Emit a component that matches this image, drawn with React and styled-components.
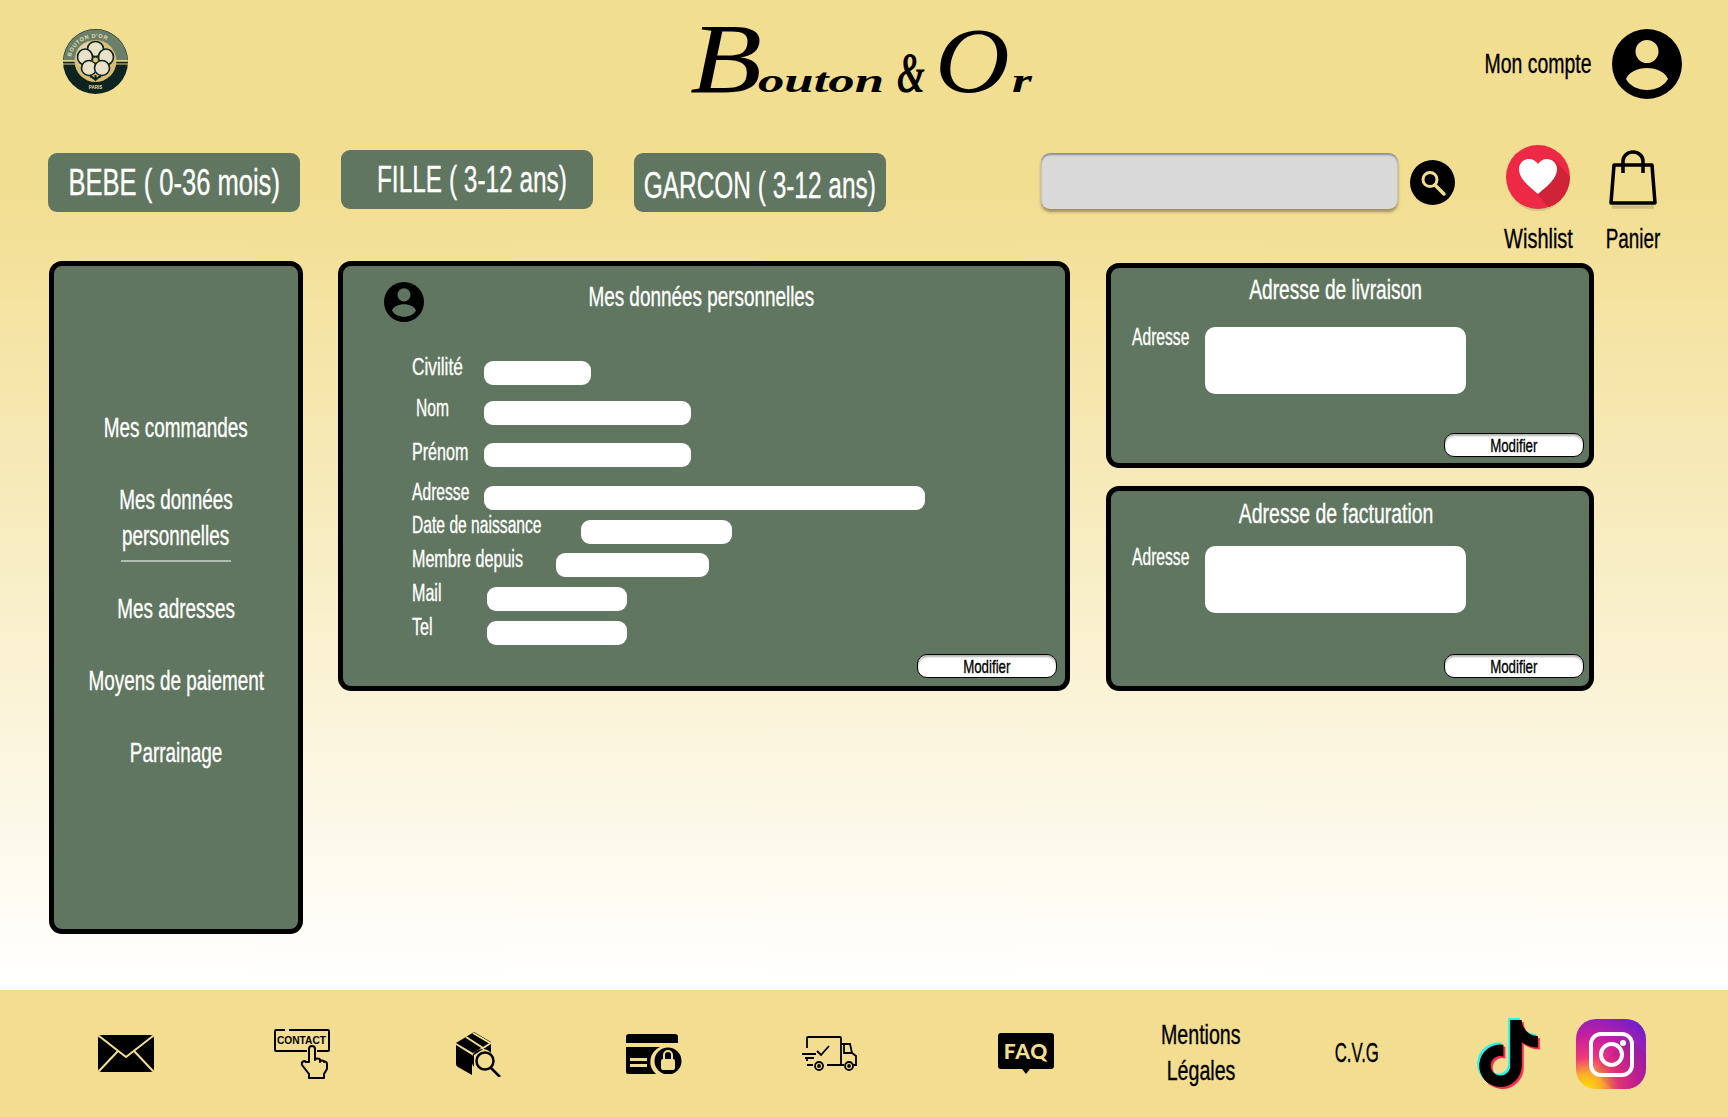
import React from "react";
import styled, { createGlobalStyle } from "styled-components";
import { FaTiktok } from "react-icons/fa";

const GlobalStyle = createGlobalStyle`
  html, body { margin: 0; padding: 0; }
  body { font-family: "Liberation Sans", Arial, sans-serif; }
  * { box-sizing: border-box; }
`;

const GREEN = "#617660";
const SAND = "#f2de91";

const Page = styled.div`
  width: 1728px;
  height: 1117px;
  overflow: hidden;
  display: flex;
  flex-direction: column;
  background: linear-gradient(180deg, ${SAND} 0, ${SAND} 190px, #ffffff 985px);
`;

// no condensed family is installed, so the narrow lettering is squeezed
const Squeeze = styled.span`
  display: inline-block;
  flex: none;
  white-space: nowrap;
  -webkit-text-stroke: 0.35px currentColor;
  transform: scaleX(${(p) => p.$x || 0.7});
  transform-origin: ${(p) => p.$origin || "center"};
`;

const Header = styled.header`
  display: grid;
  grid-template-columns: 627px 1fr auto;
  align-items: center;
  height: 118px;
  padding: 0 46px 0 63px;
`;

const LogoSlot = styled.div`
  height: 65px;
  margin-top: 5px;
`;

const Brand = styled.h1`
  display: flex;
  align-items: baseline;
  height: 118px;
  margin: 0;
  font-family: "Liberation Serif", serif;
  font-style: italic;
  font-weight: 700;
  line-height: 118px;
  color: #000;
  white-space: nowrap;
`;

const BrandPart = styled.span`
  display: inline-block;
  flex: none;
  width: ${(p) => p.$w}px;
  font-size: ${(p) => p.$size}px;
  font-weight: ${(p) => p.$weight || 700};
  transform: scaleX(${(p) => p.$x});
  transform-origin: left;
`;

const Account = styled.div`
  display: flex;
  align-items: center;
  gap: 20px;
  margin-top: 10px;
  font-size: 27px;
`;

const NavRow = styled.nav`
  display: flex;
  align-items: flex-start;
  height: 143px;
  padding-left: 48px;
`;

const AgeTab = styled.div`
  width: 252px;
  height: 59px;
  margin: ${(p) => p.$top}px 41px 0 0;
  padding-left: ${(p) => p.$shift || 0}px;
  padding-top: ${(p) => p.$drop || 0}px;
  display: flex;
  justify-content: center;
  border-radius: 9px;
  background: ${GREEN};
  color: #fff;
  font-size: 37px;
  line-height: 59px;
`;

const SearchField = styled.div`
  width: 357px;
  height: 56px;
  margin: 35px 12px 0 114px;
  border-radius: 9px;
  background: #d9d9d9;
  box-shadow: 0 3px 3px rgba(0, 0, 0, 0.35), inset 0 2px 2px rgba(0, 0, 0, 0.35);
`;

const SearchButton = styled.div`
  width: 45px;
  height: 45px;
  margin: 42px 51px 0 0;
  display: flex;
`;

const ShopLink = styled.div`
  width: ${(p) => p.$w}px;
  margin: 27px 0 0 ${(p) => p.$left || 0}px;
  display: flex;
  flex-direction: column;
  align-items: center;
  font-size: 27px;
  color: #000;
`;

const ShopIcon = styled.div`
  height: 70px;
  padding-top: ${(p) => p.$top || 0}px;
  & > svg { display: block; }
`;

const ShopLabel = styled.div`
  margin-top: 5px;
  line-height: 38px;
  display: flex;
  justify-content: center;
  width: 100%;
`;

const Content = styled.main`
  display: flex;
  align-items: flex-start;
  padding-left: 49px;
  height: 729px;
`;

const Panel = styled.section`
  background: ${GREEN};
  border: 5px solid #000;
  border-radius: 13px;
  color: #fff;
`;

const SideMenu = styled(Panel)`
  width: 254px;
  height: 673px;
  margin-right: 35px;
  padding-top: 144px;
  display: flex;
  flex-direction: column;
  align-items: center;
`;

const MenuItem = styled.div`
  display: flex;
  justify-content: center;
  font-size: 27px;
  line-height: 36px;
  margin-bottom: 36px;
`;

const ActiveItem = styled(MenuItem)`
  width: 110px;
  flex-direction: column;
  align-items: center;
  padding-bottom: 6px;
  margin-bottom: 29px;
  border-bottom: 2px solid #b2bdb1;
`;

const DataPanel = styled(Panel)`
  width: 732px;
  height: 430px;
  padding: 16px 8px 0 41px;
`;

const DataHead = styled.div`
  display: flex;
  align-items: flex-start;
  height: 71px;
`;

const PanelTitle = styled.h2`
  display: flex;
  justify-content: center;
  margin: 0;
  font-size: 27px;
  font-weight: 400;
  line-height: 32px;
`;

const DataTitle = styled(PanelTitle)`
  width: 556px;
  margin: -1px 0 0 -1px;
`;

const FieldList = styled.div`
  display: flex;
  flex-direction: column;
  padding-left: 28px;
`;

const FieldRow = styled.div`
  display: flex;
  align-items: flex-start;
  height: ${(p) => p.$h}px;
`;

const FieldLabel = styled.label`
  width: ${(p) => p.$w}px;
  padding-left: ${(p) => p.$indent || 0}px;
  font-size: 23px;
  line-height: 28px;
  flex: none;
`;

const FieldBox = styled.div`
  width: ${(p) => p.$w}px;
  height: 24px;
  margin-top: ${(p) => p.$top}px;
  border-radius: 9px;
  background: #fff;
`;

const ModifyRow = styled.div`
  display: flex;
  justify-content: flex-end;
`;

const ModifyButton = styled.button`
  display: flex;
  justify-content: center;
  width: 140px;
  height: 24px;
  padding: 0;
  border: 1px solid #000;
  border-radius: 10px;
  background: #fff;
  box-shadow: inset 0 2px 2px rgba(0, 0, 0, 0.3);
  color: #000;
  font-family: inherit;
  font-size: 19px;
  line-height: 23px;
`;

const AddressColumn = styled.div`
  display: flex;
  flex-direction: column;
  gap: 18px;
  margin: 2px 0 0 36px;
`;

const AddressPanel = styled(Panel)`
  width: 488px;
  height: 205px;
  padding: ${(p) => p.$pad}px 5px 0 21px;
`;

const AddressTitle = styled(PanelTitle)`
  width: 420px;
  margin-left: -6px;
`;

const AddressBody = styled.div`
  display: flex;
  align-items: flex-start;
  height: ${(p) => p.$h}px;
  margin-top: ${(p) => p.$top}px;
`;

const AddressLabel = styled.label`
  width: 73px;
  font-size: 23px;
  line-height: 28px;
`;

const AddressBox = styled.div`
  width: 261px;
  height: 67px;
  margin-top: ${(p) => p.$top}px;
  border-radius: 10px;
  background: #fff;
`;

const Footer = styled.footer`
  height: 127px;
  display: flex;
  align-items: center;
  padding-left: 98px;
  background: #f2dd90;
`;

const FooterIcon = styled.div`
  width: ${(p) => p.$w}px;
  height: ${(p) => p.$h}px;
  margin-right: ${(p) => p.$gap}px;
  flex: none;
  & > svg { display: block; width: 100%; height: 100%; }
`;

const FooterText = styled.div`
  flex: none;
  display: flex;
  flex-direction: column;
  align-items: center;
  width: ${(p) => p.$w}px;
  margin: -2px ${(p) => p.$gap}px 0 0;
  font-size: 28px;
  line-height: 36px;
  color: #000;
`;

const TikTokMark = styled.div`
  position: relative;
  width: 63px;
  height: 71px;
  margin-right: 36px;
  flex: none;
`;

const TikTokLayer = styled(FaTiktok)`
  position: absolute;
  left: ${(p) => p.$off}px;
  top: ${(p) => p.$off}px;
  width: 59px;
  height: 67px;
  color: ${(p) => p.$color};
`;

const UserIcon = ({ size }) => (
  <svg width={size} height={size} viewBox="0 0 70 70">
    <path
      fillRule="evenodd"
      d="M35 0a35 35 0 1 0 0 70a35 35 0 1 0 0-70zM35 11a11.500 11.500 0 1 1 0 23a11.500 11.500 0 1 1 0-23zM35 39c10 0 18 4 21 11c-4 7-12 11-21 11s-17-4-21-11c3-7 11-11 21-11z"
    />
  </svg>
);

const Logo = () => (
  <svg width="65" height="65" viewBox="0 0 65 65">
    <defs>
      <clipPath id="logo-top"><rect x="0" y="0" width="65" height="33" /></clipPath>
      <path id="logo-arc" d="M7 34a25.500 25.500 0 0 1 51 0" />
    </defs>
    <circle cx="32.500" cy="32.500" r="32.500" fill="#0f2420" />
    <circle cx="32.500" cy="32.500" r="32" fill="#6b8068" clipPath="url(#logo-top)" />
    <rect x="0" y="31" width="65" height="1.500" fill="#e6cf7d" />
    <rect x="0" y="34.500" width="65" height="1" fill="#e6cf7d" />
    <circle cx="32.500" cy="32" r="21" fill="#d9bd72" />
    <circle cx="27" cy="27" r="14" fill="#efe6cf" opacity="0.55" />
    <text fontFamily="Liberation Sans" fontSize="5.500" fontWeight="700" fill="#e8dfb0" letterSpacing="0.6">
      <textPath href="#logo-arc" startOffset="8%">BOUTON D'OR</textPath>
    </text>
    <text x="32.500" y="60" fontFamily="Liberation Sans" fontSize="4.500" fontWeight="700" fill="#e8dfb0" textAnchor="middle">PARIS</text>
    <g fill="#e9e1c8" stroke="#0f2420" strokeWidth="1.600">
      <ellipse cx="32.500" cy="20" rx="8" ry="7.500" />
      <ellipse cx="22" cy="28" rx="7.500" ry="8" />
      <ellipse cx="43" cy="28" rx="7.500" ry="8" />
      <ellipse cx="26" cy="39" rx="7.500" ry="7.500" />
      <ellipse cx="39" cy="39" rx="7.500" ry="7.500" />
    </g>
    <circle cx="32.500" cy="31" r="3" fill="#e3c770" stroke="#0f2420" />
    <path d="M32.500 46v5M27 47c2 1 4 2 5.500 4c1.500-2 3.500-3 5.500-4" stroke="#0f2420" strokeWidth="2" fill="none" />
  </svg>
);

const SearchIcon = () => (
  <svg width="45" height="45" viewBox="0 0 45 45">
    <circle cx="22.500" cy="22.500" r="22.500" fill="#000" />
    <circle cx="20" cy="19.500" r="7" fill="none" stroke={SAND} strokeWidth="3" />
    <path d="M25 25l9 9" stroke={SAND} strokeWidth="3.500" strokeLinecap="round" />
  </svg>
);

const HeartIcon = () => (
  <svg width="64" height="70" viewBox="0 0 64 70">
    <defs>
      <clipPath id="heart-disc"><circle cx="32" cy="32" r="32" /></clipPath>
    </defs>
    <ellipse cx="32" cy="35" rx="31" ry="31" fill="#000" opacity="0.12" />
    <circle cx="32" cy="32" r="32" fill="#ed2946" />
    <path d="M22 38L48 14l16 18v32H44z" fill="#cf2438" clipPath="url(#heart-disc)" />
    <path d="M32 49C24 42 13 34 13 24c0-6 5-10 10-10c4 0 7 2 9 5c2-3 5-5 9-5c5 0 10 4 10 10c0 10-11 18-19 25z" fill="#fff" />
  </svg>
);

const BagIcon = () => (
  <svg width="48" height="60" viewBox="0 0 48 60" fill="none" stroke="#000" strokeWidth="3.500">
    <path d="M5 15h38l3 38H2z" strokeLinejoin="round" />
    <path d="M14 23V11a10 9 0 0 1 20 0v12" />
    <path d="M3 57h42" stroke="#000" strokeOpacity="0.15" />
  </svg>
);

const MailIcon = () => (
  <svg viewBox="0 0 56 37">
    <rect width="56" height="37" rx="4" fill="#000" />
    <path d="M1 1l27 21L55 1M1 36l19-20M55 36L36 16" fill="none" stroke={SAND} strokeWidth="2" />
  </svg>
);

const ContactIcon = () => (
  <svg viewBox="0 0 56 50">
    <path d="M11 1H2a1 1 0 0 0-1 1v19a1 1 0 0 0 1 1h31M43 22h11a1 1 0 0 0 1-1V2a1 1 0 0 0-1-1H15" fill="none" stroke="#000" strokeWidth="2" />
    <text x="3" y="15" fontFamily="Liberation Sans" fontWeight="700" fontSize="11" textLength="49" lengthAdjust="spacingAndGlyphs">CONTACT</text>
    <path d="M35 33V20a3 3 0 0 1 6 0v11c0-2 5-2 5 0v2c0-2 4-2 4 0c1-1 3 0 3 2v5l-3 5v4H35v-4l-7-9c-1-3 2-5 4-3z" fill={SAND} stroke="#000" strokeWidth="2" strokeLinejoin="round" />
  </svg>
);

const BoxIcon = () => (
  <svg viewBox="0 0 46 46">
    <path d="M1 12L19 1l17 10l-18 11z" fill="#000" />
    <path d="M11 6l17 11M18 2l17 10" stroke={SAND} strokeWidth="2" fill="none" />
    <path d="M1 14l16 10v20L3 36q-2-1-2-3z" fill="#000" />
    <path d="M19 24l17-11v9a11 11 0 0 0-17 14z" fill="#000" />
    <circle cx="30" cy="30" r="8.500" fill={SAND} stroke="#000" strokeWidth="2.500" />
    <path d="M36 37l9 9" stroke="#000" strokeWidth="2.500" />
  </svg>
);

const CardLockIcon = () => (
  <svg viewBox="0 0 57 40">
    <path d="M4 0h46a3 3 0 0 1 3 3v6H1V3a3 3 0 0 1 3-3z" fill="#000" />
    <path d="M1 13h34a16 16 0 0 0-4 27H3a2 2 0 0 1-2-2z" fill="#000" />
    <rect x="5" y="24" width="17" height="3" fill={SAND} />
    <rect x="5" y="30" width="17" height="3" fill={SAND} />
    <circle cx="43" cy="27" r="13.500" fill="#000" />
    <rect x="36" y="25" width="14" height="11" rx="2" fill={SAND} />
    <path d="M39 25v-4a4 4 0 0 1 8 0v4" fill="none" stroke={SAND} strokeWidth="2" />
  </svg>
);

const TruckIcon = () => (
  <svg viewBox="0 0 55 35" fill="none" stroke="#000" strokeWidth="1.800">
    <path d="M5 12V2q0-1 1-1h32q1 0 1 1v27H25M5 22v3M5 29h6" />
    <path d="M39 8h9l2 9l4 3v9h-3M39 29h3M42 8v9h8" />
    <path d="M15 15l4 4l8-9" />
    <path d="M0 18h14M3 22h9" />
    <circle cx="17" cy="30" r="4" />
    <circle cx="47" cy="30" r="4" />
    <circle cx="17" cy="30" r="1" fill="#000" />
    <circle cx="47" cy="30" r="1" fill="#000" />
  </svg>
);

const FaqIcon = () => (
  <svg viewBox="0 0 56 41">
    <path d="M3 0h50a3 3 0 0 1 3 3v30a3 3 0 0 1-3 3H32l-4 5l-4-5H3a3 3 0 0 1-3-3V3a3 3 0 0 1 3-3z" fill="#000" />
    <text x="28" y="25.500" fontFamily="Lato, Liberation Sans" fontWeight="900" fontSize="21" fill={SAND} textAnchor="middle" letterSpacing="0.8">FAQ</text>
  </svg>
);

const InstagramIcon = () => (
  <svg viewBox="0 0 70 70">
    <defs>
      <radialGradient id="insta-fill" cx="0.15" cy="1" r="1.200">
        <stop offset="0" stopColor="#ffdd00" />
        <stop offset="0.18" stopColor="#fbb02a" />
        <stop offset="0.38" stopColor="#f0367a" />
        <stop offset="0.62" stopColor="#c81f9c" />
        <stop offset="1" stopColor="#6e1fcf" />
      </radialGradient>
    </defs>
    <rect width="70" height="70" rx="20" fill="url(#insta-fill)" />
    <path d="M18 52L50 22a3 3 0 0 1 4-1l16 14v15a20 20 0 0 1-20 20H36z" fill="#000" opacity="0.06" />
    <rect x="15" y="15" width="41" height="41" rx="10" fill="none" stroke="#fff" strokeWidth="4" />
    <circle cx="35.500" cy="35.500" r="10.500" fill="none" stroke="#fff" strokeWidth="4" />
    <circle cx="47" cy="24" r="3" fill="#fff" />
  </svg>
);

const fields = [
  { label: "Civilité", w: 72, h: 41, box: 107, top: 8, x: 0.75 },
  { label: "Nom", w: 72, h: 44, box: 207, top: 7, indent: 4, x: 0.68 },
  { label: "Prénom", w: 72, h: 40, box: 207, top: 5 },
  { label: "Adresse", w: 72, h: 33, box: 441, top: 8, x: 0.68 },
  { label: "Date de naissance", w: 169, h: 34, box: 151, top: 9, x: 0.68 },
  { label: "Membre depuis", w: 144, h: 34, box: 153, top: 8 },
  { label: "Mail", w: 75, h: 34, box: 140, top: 8 },
  { label: "Tel", w: 75, h: 41, box: 140, top: 8 },
];

const Modify = () => (
  <ModifyRow>
    <ModifyButton><Squeeze>Modifier</Squeeze></ModifyButton>
  </ModifyRow>
);

export default function App() {
  return (
    <Page>
      <GlobalStyle />
      <Header>
        <LogoSlot><Logo /></LogoSlot>
        <Brand>
          <BrandPart $w={68} $size={100} $x={1.18} $weight={400}>B</BrandPart>
          <BrandPart $w={139} $size={34} $x={1.55}>outon</BrandPart>
          <BrandPart $w={38} $size={58} $x={0.62}>&amp;</BrandPart>
          <BrandPart $w={77} $size={94} $x={1.1} $weight={400}>O</BrandPart>
          <BrandPart $w={20} $size={34} $x={1.5}>r</BrandPart>
        </Brand>
        <Account>
          <Squeeze $x={0.72} $origin="right">Mon compte</Squeeze>
          <UserIcon size={70} />
        </Account>
      </Header>

      <NavRow>
        <AgeTab $top={35}><Squeeze $x={0.69}>BEBE ( 0-36 mois)</Squeeze></AgeTab>
        <AgeTab $top={32} $shift={9}><Squeeze $x={0.66}>FILLE ( 3-12 ans)</Squeeze></AgeTab>
        <AgeTab $top={35} $drop={3}><Squeeze $x={0.66}>GARCON ( 3-12 ans)</Squeeze></AgeTab>
        <SearchField />
        <SearchButton><SearchIcon /></SearchButton>
        <ShopLink $w={64}>
          <ShopIcon><HeartIcon /></ShopIcon>
          <ShopLabel><Squeeze $x={0.74}>Wishlist</Squeeze></ShopLabel>
        </ShopLink>
        <ShopLink $w={60} $left={33}>
          <ShopIcon $top={5}><BagIcon /></ShopIcon>
          <ShopLabel><Squeeze>Panier</Squeeze></ShopLabel>
        </ShopLink>
      </NavRow>

      <Content>
        <SideMenu as="aside">
          <MenuItem><Squeeze>Mes commandes</Squeeze></MenuItem>
          <ActiveItem>
            <Squeeze>Mes données</Squeeze>
            <Squeeze>personnelles</Squeeze>
          </ActiveItem>
          <MenuItem><Squeeze>Mes adresses</Squeeze></MenuItem>
          <MenuItem><Squeeze>Moyens de paiement</Squeeze></MenuItem>
          <MenuItem><Squeeze>Parrainage</Squeeze></MenuItem>
        </SideMenu>

        <DataPanel>
          <DataHead>
            <UserIcon size={40} />
            <DataTitle><Squeeze>Mes données personnelles</Squeeze></DataTitle>
          </DataHead>
          <FieldList>
            {fields.map((f) => (
              <FieldRow key={f.label} $h={f.h}>
                <FieldLabel $w={f.w} $indent={f.indent}>
                  <Squeeze $x={f.x} $origin="left">{f.label}</Squeeze>
                </FieldLabel>
                <FieldBox $w={f.box} $top={f.top} />
              </FieldRow>
            ))}
          </FieldList>
          <Modify />
        </DataPanel>

        <AddressColumn>
          <AddressPanel $pad={6}>
            <AddressTitle><Squeeze $x={0.71}>Adresse de livraison</Squeeze></AddressTitle>
            <AddressBody $top={17} $h={110}>
              <AddressLabel><Squeeze $x={0.68} $origin="left">Adresse</Squeeze></AddressLabel>
              <AddressBox $top={4} />
            </AddressBody>
            <Modify />
          </AddressPanel>
          <AddressPanel $pad={7}>
            <AddressTitle><Squeeze $x={0.72}>Adresse de facturation</Squeeze></AddressTitle>
            <AddressBody $top={13} $h={111}>
              <AddressLabel><Squeeze $x={0.68} $origin="left">Adresse</Squeeze></AddressLabel>
              <AddressBox $top={3} />
            </AddressBody>
            <Modify />
          </AddressPanel>
        </AddressColumn>
      </Content>

      <Footer>
        <FooterIcon $w={56} $h={37} $gap={120}><MailIcon /></FooterIcon>
        <FooterIcon $w={56} $h={50} $gap={125}><ContactIcon /></FooterIcon>
        <FooterIcon $w={46} $h={46} $gap={124}><BoxIcon /></FooterIcon>
        <FooterIcon $w={57} $h={40} $gap={120}><CardLockIcon /></FooterIcon>
        <FooterIcon $w={55} $h={35} $gap={141}><TruckIcon /></FooterIcon>
        <FooterIcon $w={56} $h={41} $gap={102}><FaqIcon /></FooterIcon>
        <FooterText $w={90} $gap={86}>
          <Squeeze>Mentions</Squeeze>
          <Squeeze>Légales</Squeeze>
        </FooterText>
        <FooterText $w={50} $gap={95}><Squeeze $x={0.6}>C.V.G</Squeeze></FooterText>
        <TikTokMark>
          <TikTokLayer $off={0} $color="#25f4ee" />
          <TikTokLayer $off={4} $color="#fe2c55" />
          <TikTokLayer $off={2} $color="#000" />
        </TikTokMark>
        <FooterIcon $w={70} $h={70} $gap={0}><InstagramIcon /></FooterIcon>
      </Footer>
    </Page>
  );
}
